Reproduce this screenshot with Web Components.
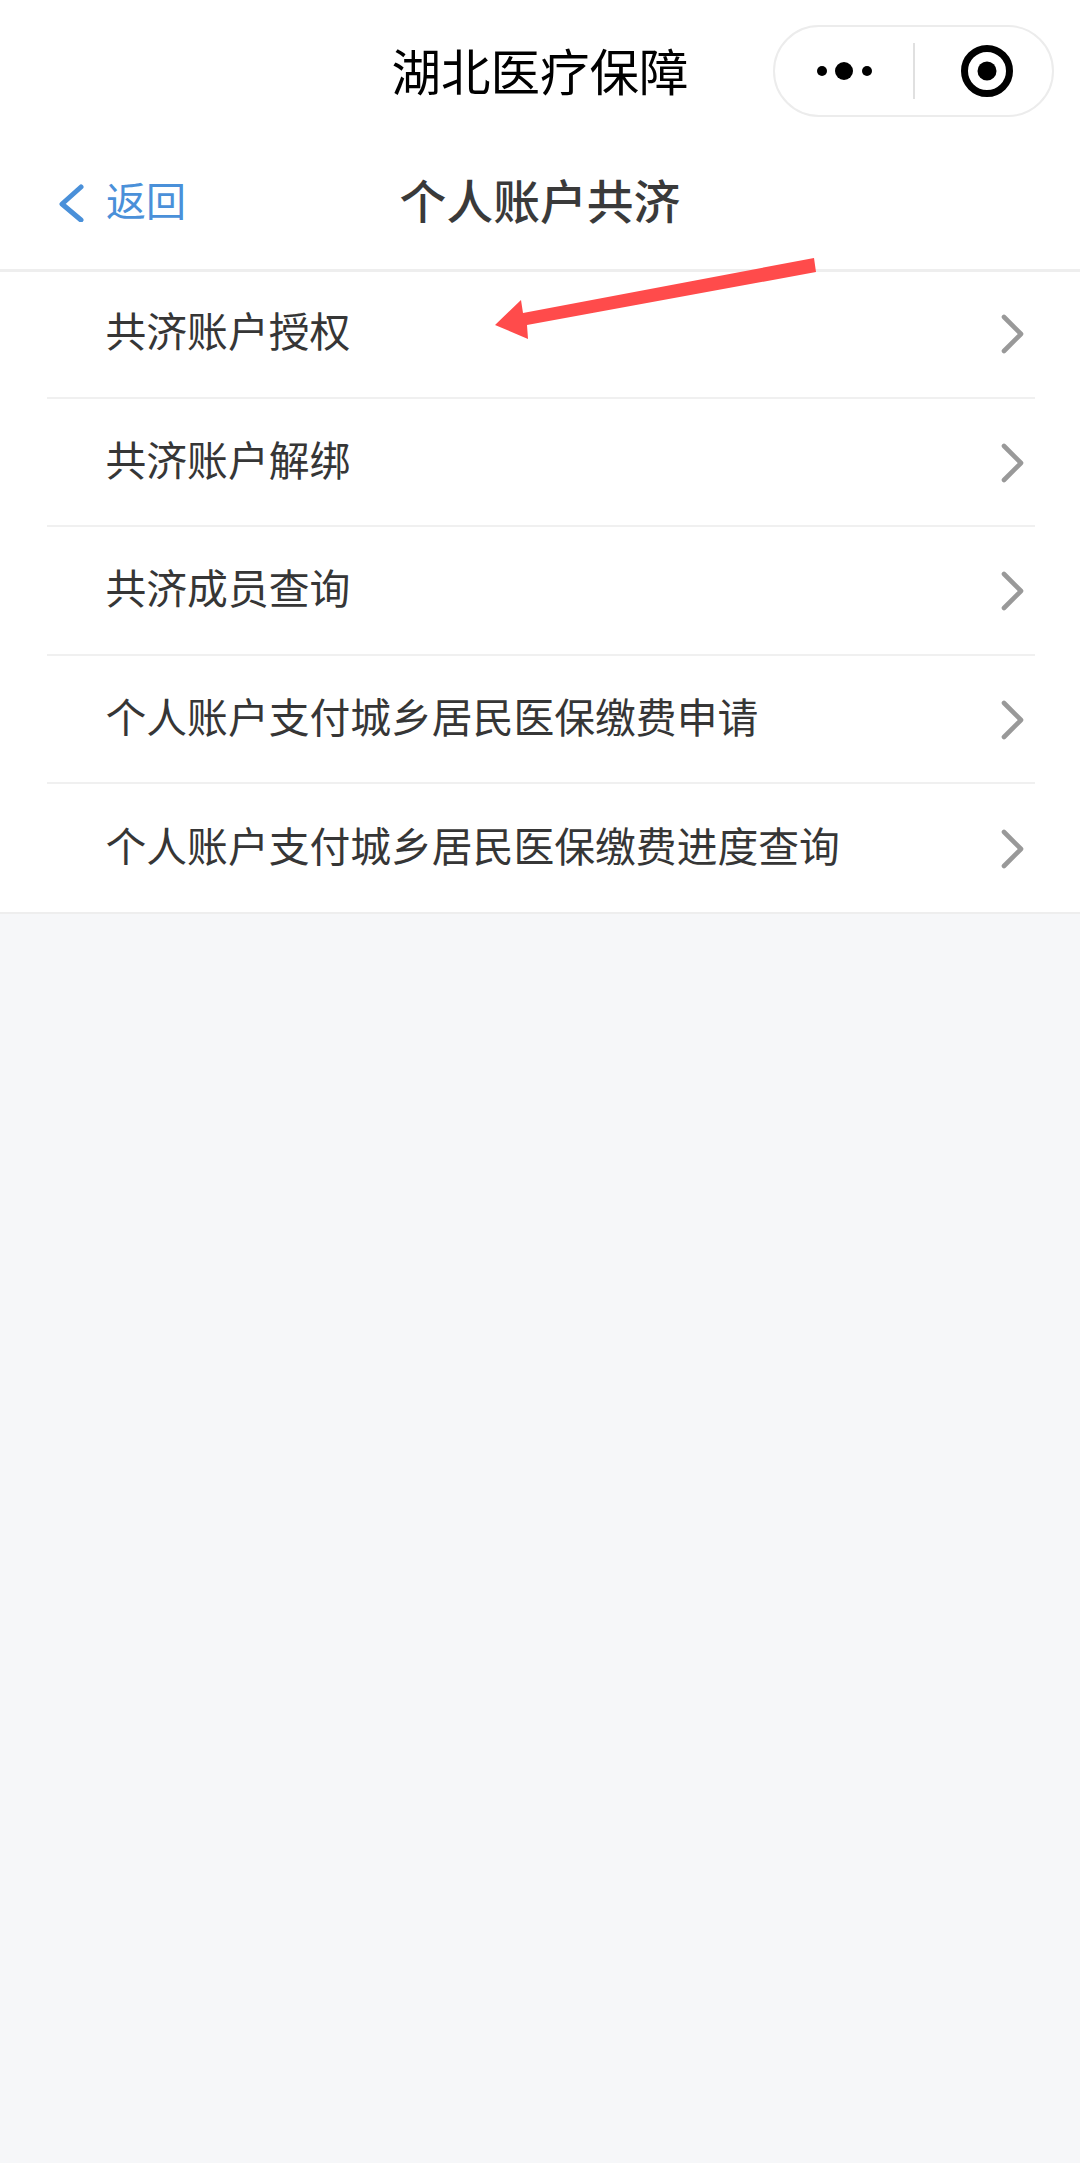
<!DOCTYPE html>
<html lang="zh-CN">
<head>
<meta charset="utf-8">
<title>个人账户共济</title>
<style>
  html, body { margin: 0; padding: 0; }
  body {
    width: 1080px;
    height: 2163px;
    overflow: hidden;
    background: #f6f7f9;
    font-family: "Noto Sans CJK SC", "Noto Sans", sans-serif;
  }
</style>
</head>
<body>
<app-page>
  <mini-titlebar title="湖北医疗保障"></mini-titlebar>
  <nav-bar title="个人账户共济" back="返回"></nav-bar>
  <menu-list>
    <menu-item>共济账户授权</menu-item>
    <menu-item>共济账户解绑</menu-item>
    <menu-item>共济成员查询</menu-item>
    <menu-item>个人账户支付城乡居民医保缴费申请</menu-item>
    <menu-item last>个人账户支付城乡居民医保缴费进度查询</menu-item>
  </menu-list>
  <red-arrow></red-arrow>
</app-page>

<script>
class AppPage extends HTMLElement {
  connectedCallback() {
    this.attachShadow({ mode: 'open' });
    this.shadowRoot.innerHTML = `
      <style>
        :host { display: block; position: relative; width: 1080px; height: 2163px; }
      </style>
      <slot></slot>
    `;
  }
}

class MiniTitlebar extends HTMLElement {
  connectedCallback() {
    this.attachShadow({ mode: 'open' });
    this.shadowRoot.innerHTML = `
      <style>
        :host {
          display: block;
          background: #fff;
        }
        .bar {
          height: 140px;
          display: flex;
          align-items: center;
          justify-content: center;
          position: relative;
        }
        h1 {
          margin: 0 0 1px;
          font-size: 49.5px;
          font-weight: 400;
          line-height: 60px;
          color: #000;
        }
        .capsule {
          position: absolute;
          top: 25px;
          right: 26px;
          width: 281px;
          height: 92px;
          box-sizing: border-box;
          display: flex;
          align-items: center;
          border: 2px solid #ececec;
          border-radius: 46px;
        }
        svg { display: block; }
        .sep { width: 2px; height: 56px; background: #e0e0e0; }
        .side { display: flex; align-items: center; justify-content: center; box-sizing: border-box; }
        .side.dots { width: 138px; padding-left: 3px; }
        .side.home { flex: 1; padding-left: 7px; }
      </style>
      <div class="bar">
        <h1>${this.getAttribute('title')}</h1>
        <div class="capsule">
          <div class="side dots">
            <svg width="60" height="20" viewBox="0 0 60 20">
              <circle cx="6" cy="10" r="5" fill="#000"/>
              <circle cx="28" cy="10" r="9" fill="#000"/>
              <circle cx="51" cy="10" r="5" fill="#000"/>
            </svg>
          </div>
          <div class="sep"></div>
          <div class="side home">
            <svg width="54" height="54" viewBox="0 0 54 54">
              <circle cx="27" cy="27" r="22.5" fill="none" stroke="#000" stroke-width="7"/>
              <circle cx="27" cy="27" r="9.5" fill="#000"/>
            </svg>
          </div>
        </div>
      </div>
    `;
  }
}

class NavBar extends HTMLElement {
  connectedCallback() {
    this.attachShadow({ mode: 'open' });
    this.shadowRoot.innerHTML = `
      <style>
        :host {
          display: block;
          position: relative;
          z-index: 1;
          background: #fff;
          border-bottom: 3px solid #eeeeee;
        }
        .row {
          box-sizing: border-box;
          height: 129px;
          padding-bottom: 10px;
          display: flex;
          align-items: center;
          justify-content: center;
          position: relative;
        }
        h2 {
          margin: 0 0 2px;
          font-size: 46.8px;
          font-weight: 500;
          line-height: 60px;
          color: #3a3a3a;
        }
        .back {
          position: absolute;
          left: 58px;
          top: 0;
          bottom: 10px;
          display: flex;
          align-items: center;
          gap: 22px;
          color: #4a90d9;
          font-size: 40px;
        }
        .back span { margin-bottom: 2px; }
        svg { display: block; margin-top: 6px; }
      </style>
      <div class="row">
        <div class="back">
          <svg width="26" height="38" viewBox="0 0 26 38">
            <path d="M23 3 L4 20 L23 36" fill="none" stroke="#4a90d9" stroke-width="5" stroke-linecap="round" stroke-linejoin="round"/>
          </svg>
          <span>${this.getAttribute('back')}</span>
        </div>
        <h2>${this.getAttribute('title')}</h2>
      </div>
    `;
  }
}

class MenuList extends HTMLElement {
  connectedCallback() {
    this.attachShadow({ mode: 'open' });
    this.shadowRoot.innerHTML = `
      <style>
        :host {
          display: block;
          margin-top: -2px;
          background: #fff;
          padding: 0 45px 0 47px;
          border-bottom: 2px solid #eeeeee;
        }
      </style>
      <slot></slot>
    `;
  }
}

class MenuItem extends HTMLElement {
  connectedCallback() {
    this.attachShadow({ mode: 'open' });
    this.shadowRoot.innerHTML = `
      <style>
        :host {
          display: flex;
          align-items: center;
          justify-content: space-between;
          box-sizing: border-box;
          height: 128.6px;
          padding: 0 10px 7px 58.5px;
          border-bottom: 2px solid #f0f0f0;
          font-size: 40.8px;
          color: #363636;
        }
        :host([last]) { border-bottom: 0; height: 127.6px; }
        svg { display: block; flex: none; margin-top: 9px; }
      </style>
      <span><slot></slot></span>
      <svg width="24" height="40" viewBox="0 0 24 40">
        <path d="M3 3 L20 20 L3 37" fill="none" stroke="#999" stroke-width="4.6" stroke-linecap="round" stroke-linejoin="round"/>
      </svg>
    `;
  }
}

class RedArrow extends HTMLElement {
  connectedCallback() {
    this.attachShadow({ mode: 'open' });
    this.shadowRoot.innerHTML = `
      <style>
        :host { position: absolute; left: 490px; top: 250px; width: 330px; height: 95px; z-index: 2; }
        svg { display: block; }
      </style>
      <svg width="330" height="95" viewBox="490 250 330 95">
        <polygon points="495,325 521,300 523,313 814,258 816,272 527,325 528,339" fill="#ff4b4b"/>
      </svg>
    `;
  }
}

customElements.define('app-page', AppPage);
customElements.define('mini-titlebar', MiniTitlebar);
customElements.define('nav-bar', NavBar);
customElements.define('menu-list', MenuList);
customElements.define('menu-item', MenuItem);
customElements.define('red-arrow', RedArrow);
</script>
</body>
</html>
